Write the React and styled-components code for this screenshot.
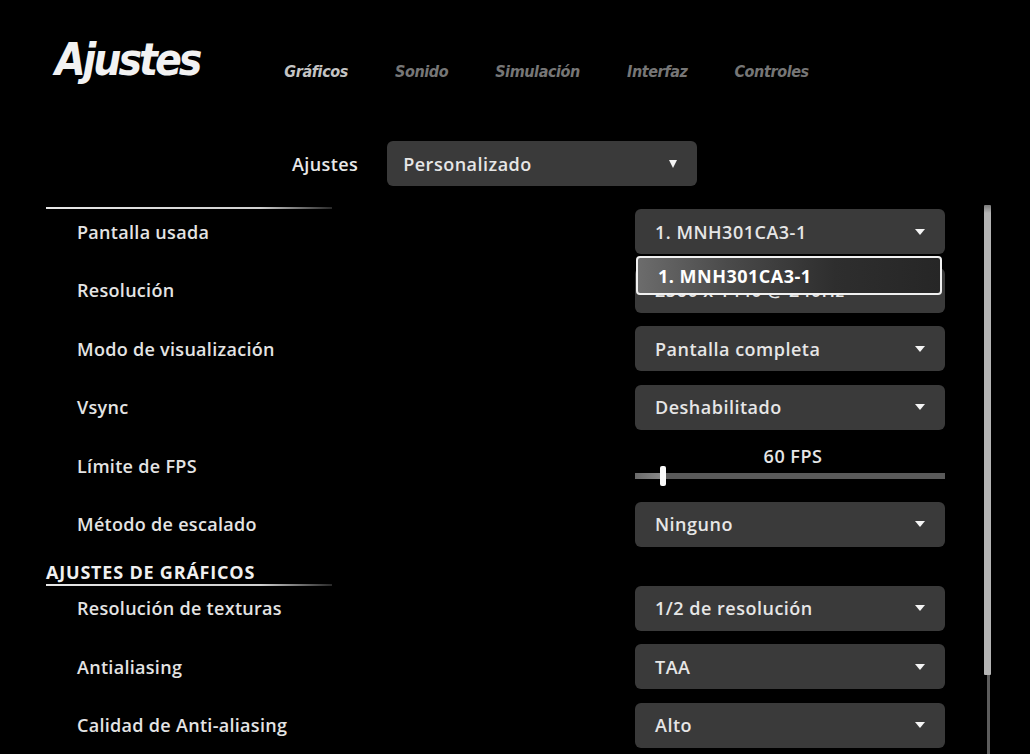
import React from "react";
import styled, { createGlobalStyle } from "styled-components";

const GlobalStyle = createGlobalStyle`
  html, body {
    margin: 0;
    padding: 0;
    background: #000;
  }
  body {
    font-family: "Open Sans", "Noto Sans", sans-serif;
  }
`;

const Page = styled.div`
  position: relative;
  width: 1030px;
  height: 754px;
  overflow: hidden;
  background: #000;
  color: #e4e4e4;
`;

const Header = styled.header`
  display: flex;
  align-items: flex-start;
  padding: 34px 0 0 55px;
  height: 58px;
`;

const Title = styled.h1`
  margin: 0 85px 0 0;
  font-family: "DejaVu Sans Condensed", "DejaVu Sans", sans-serif;
  font-style: italic;
  font-weight: 700;
  font-size: 44px;
  line-height: 52px;
  letter-spacing: -3px;
  color: #f2f2f2;
`;

const Tabs = styled.nav`
  display: flex;
  gap: 47px;
  padding-top: 28px;
`;

const Tab = styled.span`
  font-family: "DejaVu Sans Condensed", "DejaVu Sans", sans-serif;
  font-style: italic;
  font-weight: 700;
  font-size: 16px;
  line-height: 20px;
  letter-spacing: -0.4px;
  color: ${({ $active }) => ($active ? "#c4c4c4" : "#767676")};
`;

const PresetRow = styled.div`
  display: flex;
  align-items: center;
  gap: 29px;
  margin: 49px 0 0 292px;
`;

const PresetLabel = styled.span`
  font-size: 18px;
  font-weight: 600;
  letter-spacing: 0.4px;
  color: #e8e8e8;
`;

const Select = styled.div`
  position: relative;
  display: flex;
  align-items: center;
  justify-content: space-between;
  box-sizing: border-box;
  width: ${({ $width }) => $width || 310}px;
  height: 45px;
  padding: 0 20px 0 ${({ $padLeft }) => $padLeft || 20}px;
  border-radius: 6px;
  background: #3a3a3a;
  font-size: 18px;
  font-weight: 600;
  letter-spacing: 0.5px;
  color: #e6e6e6;
`;

const Arrow = styled.span`
  width: 0;
  height: 0;
  border-left: ${({ $w }) => $w / 2}px solid transparent;
  border-right: ${({ $w }) => $w / 2}px solid transparent;
  border-top: ${({ $h }) => $h}px solid #f4f4f4;
`;

const Body = styled.div`
  display: flex;
  margin-top: 21px;
  height: 547px;
`;

const Scroller = styled.div`
  flex: 1;
  overflow: hidden;
  padding-left: 46px;
`;

const List = styled.div`
  display: flex;
  flex-direction: column;
  width: 900px;
`;

const SectionHeader = styled.div`
  display: flex;
  flex-direction: column;
  margin: ${({ $first }) => ($first ? "0" : "15px")} 0 0;
`;

const SectionTitle = styled.div`
  font-size: 18px;
  font-weight: 700;
  letter-spacing: 0.8px;
  line-height: 20px;
  color: #f0f0f0;
  margin-bottom: 2px;
`;

const SectionLine = styled.div`
  width: 286px;
  height: 2px;
  background: linear-gradient(90deg, #e8e8e8 0%, #d0d0d0 75%, rgba(200, 200, 200, 0.2) 100%);
`;

const Row = styled.div`
  display: flex;
  align-items: center;
  justify-content: space-between;
  height: 45px;
  padding-left: 31px;
  width: 899px;
  box-sizing: border-box;
  & + & {
    margin-top: 13.5px;
  }
`;

const Label = styled.span`
  font-size: 18px;
  font-weight: 600;
  letter-spacing: 0.3px;
  color: #e4e4e4;
`;

const Popup = styled.div`
  position: absolute;
  left: 1px;
  right: 3px;
  top: 47px;
  z-index: 2;
  display: flex;
  align-items: center;
  box-sizing: border-box;
  height: 39px;
  padding-left: 20px;
  border: 2px solid #f0f0f0;
  border-radius: 4px;
  background: linear-gradient(90deg, #6c6c6c 0%, #4a4a4a 30%, #2e2e2e 65%, #262626 100%);
  font-size: 18px;
  font-weight: 700;
  letter-spacing: 0.5px;
  color: #fff;
`;

const Slider = styled.div`
  display: flex;
  flex-direction: column;
  align-items: center;
  width: 310px;
  height: 45px;
`;

const SliderValue = styled.div`
  margin: 3px 0 0 6px;
  font-size: 18px;
  font-weight: 600;
  letter-spacing: 0.5px;
  color: #e6e6e6;
  line-height: 20px;
`;

const Track = styled.div`
  position: relative;
  width: 100%;
  height: 6px;
  margin-top: 7px;
  background: #5a5a5a;
`;

const Fill = styled.div`
  height: 100%;
  background: linear-gradient(90deg, #6a6a6a, #8a8a8a);
`;

const Thumb = styled.div`
  position: absolute;
  top: -7px;
  width: 6px;
  height: 20px;
  margin-left: -3px;
  border-radius: 2px;
  background: #fafafa;
`;

const ScrollBar = styled.div`
  position: relative;
  width: 8px;
  margin: -2px 38px 0 0;
  display: flex;
  justify-content: center;
`;

const ScrollTrack = styled.div`
  width: 3px;
  height: 100%;
  background: #5c5c5c;
`;

const ScrollThumb = styled.div`
  position: absolute;
  top: 0;
  left: 0;
  width: 7px;
  height: 470px;
  border-radius: 1px;
  background: linear-gradient(180deg, #7a7a7a 0, #b4b4b4 8px, #b4b4b4 100%);
`;

const tabs = ["Gráficos", "Sonido", "Simulación", "Interfaz", "Controles"];

const displayRows = [
  { label: "Pantalla usada", value: "1. MNH301CA3-1", open: true },
  { label: "Resolución", value: "2560 x 1440 @ 240Hz" },
  { label: "Modo de visualización", value: "Pantalla completa" },
  { label: "Vsync", value: "Deshabilitado" },
  { label: "Límite de FPS", slider: { value: "60 FPS", pct: 9 } },
  { label: "Método de escalado", value: "Ninguno" },
];

const graphicsRows = [
  { label: "Resolución de texturas", value: "1/2 de resolución" },
  { label: "Antialiasing", value: "TAA" },
  { label: "Calidad de Anti-aliasing", value: "Alto" },
];

const SettingRow = ({ label, value, open, slider }) => (
  <Row>
    <Label>{label}</Label>
    {slider ? (
      <Slider>
        <SliderValue>{slider.value}</SliderValue>
        <Track>
          <Fill style={{ width: `${slider.pct}%` }} />
          <Thumb style={{ left: `${slider.pct}%` }} />
        </Track>
      </Slider>
    ) : (
      <Select>
        {value}
        <Arrow $w={10} $h={6} />
        {open && <Popup>{value}</Popup>}
      </Select>
    )}
  </Row>
);

export default function App() {
  return (
    <Page>
      <GlobalStyle />
      <Header>
        <Title>Ajustes</Title>
        <Tabs>
          {tabs.map((t, i) => (
            <Tab key={t} $active={i === 0}>
              {t}
            </Tab>
          ))}
        </Tabs>
      </Header>
      <PresetRow>
        <PresetLabel>Ajustes</PresetLabel>
        <Select $width={310} $padLeft={16}>
          Personalizado
          <Arrow $w={8} $h={8} />
        </Select>
      </PresetRow>
      <Body>
        <Scroller>
          <List>
            <SectionHeader $first>
              <SectionLine />
            </SectionHeader>
            {displayRows.map((r) => (
              <SettingRow key={r.label} {...r} />
            ))}
            <SectionHeader>
              <SectionTitle>AJUSTES DE GRÁFICOS</SectionTitle>
              <SectionLine />
            </SectionHeader>
            {graphicsRows.map((r) => (
              <SettingRow key={r.label} {...r} />
            ))}
          </List>
        </Scroller>
        <ScrollBar>
          <ScrollTrack />
          <ScrollThumb />
        </ScrollBar>
      </Body>
    </Page>
  );
}
